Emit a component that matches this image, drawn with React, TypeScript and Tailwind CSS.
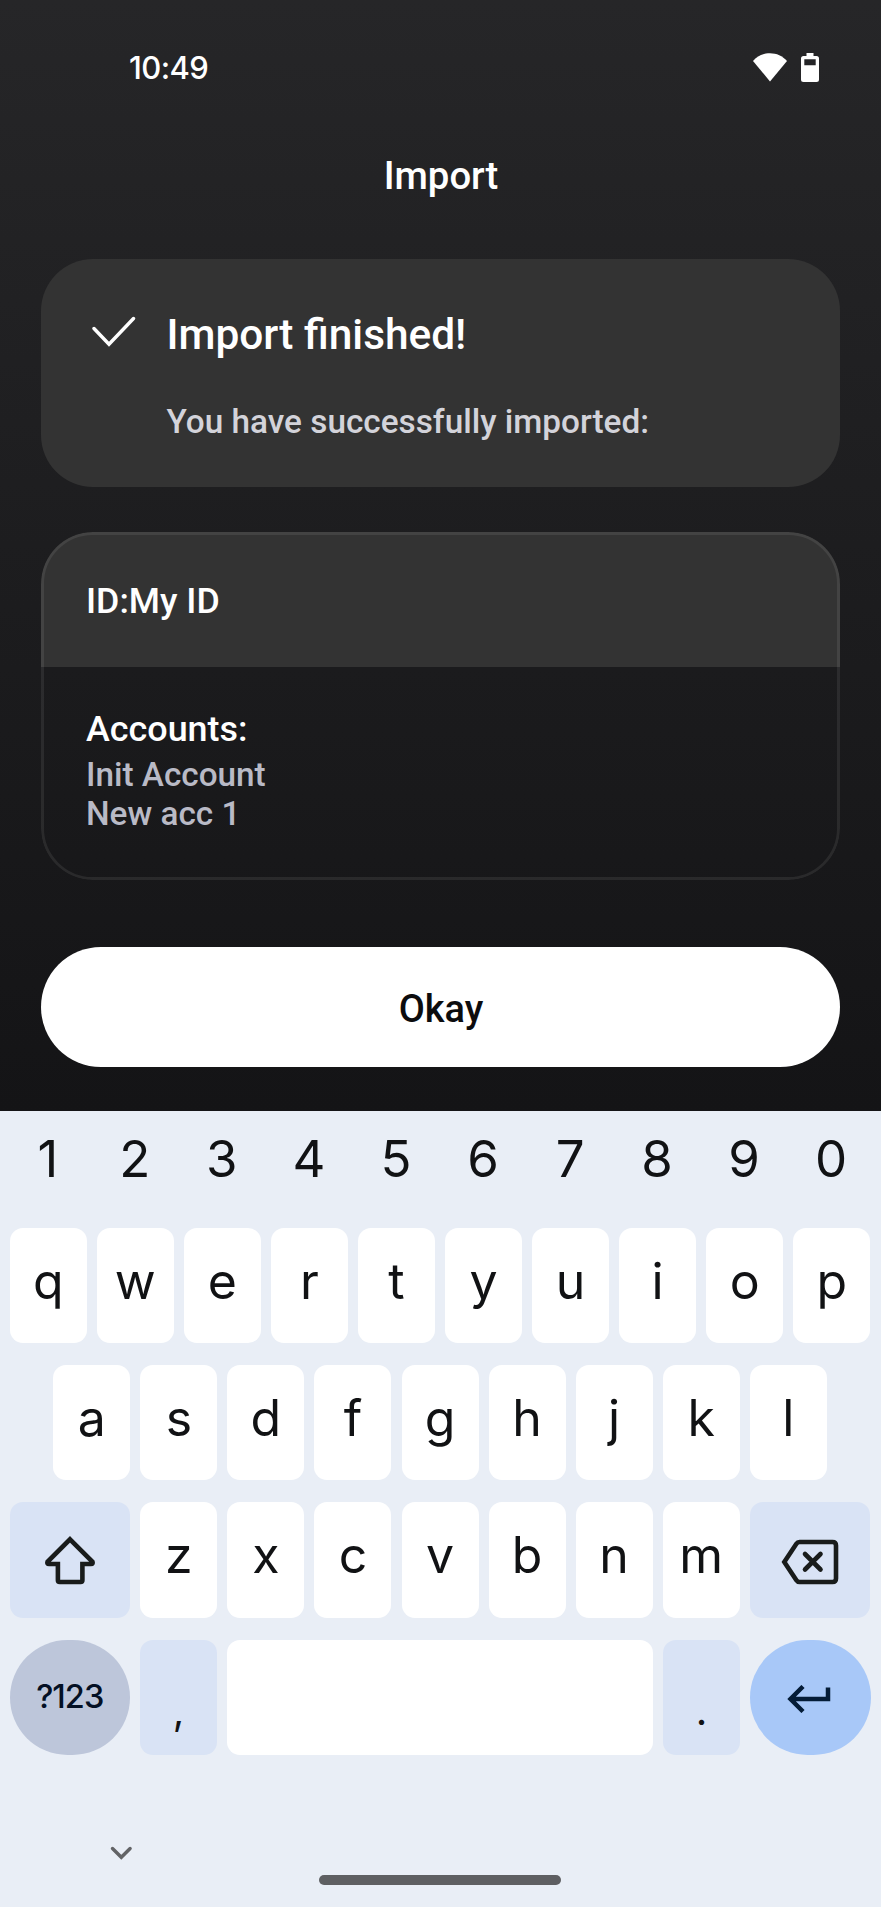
import type { ReactNode } from "react";

const DIGITS = ["1", "2", "3", "4", "5", "6", "7", "8", "9", "0"];
const ROW_ONE = ["q", "w", "e", "r", "t", "y", "u", "i", "o", "p"];
const ROW_TWO = ["a", "s", "d", "f", "g", "h", "j", "k", "l"];
const ROW_THREE = ["z", "x", "c", "v", "b", "n", "m"];

function Key({ children }: { children?: ReactNode }) {
  return (
    <div className="flex h-full w-[77px] shrink-0 items-center justify-center rounded-[13px] bg-white pb-[10px]">
      {children}
    </div>
  );
}

function KeyRow({ children }: { children: ReactNode }) {
  return <div className="flex h-[115.3px] justify-center gap-[10.06px]">{children}</div>;
}

function StatusBar() {
  return (
    <div className="flex h-[135px] items-center justify-between pr-[62px] pl-[129px]">
      <span className="font-['Inter',sans-serif] text-[31px] leading-10 font-medium tracking-[-0.6px]">10:49</span>
      <div className="flex items-center gap-[14px]">
        <svg width="34" height="29" viewBox="0 0 34 29" fill="#fff">
          <path d="M17 28.5 0 8C4.500 3 10.500 .3 17 .3S29.500 3 34 8Z" />
        </svg>
        <svg width="18" height="29" viewBox="0 0 18 29" fill="#fff">
          <path fillRule="evenodd" d="M5.500 0h7v3H15.500A2.500 2.500 0 0 1 18 5.500V26.500A2.500 2.500 0 0 1 15.500 29H2.500A2.500 2.500 0 0 1 0 26.500V5.500A2.500 2.500 0 0 1 2.500 3H5.500ZM3.300 6.200V12.200H14.700V6.200Z" />
        </svg>
      </div>
    </div>
  );
}

export default function App() {
  return (
    <div className="flex h-[1907px] w-[881px] flex-col overflow-hidden bg-[#e9eef6] font-['Roboto',sans-serif]">
      <div className="h-[1111px] shrink-0 bg-linear-to-b from-[#262628] to-[#141416] font-medium text-white">
        <StatusBar />
        <h1 className="flex h-[83px] items-center justify-center pb-[2px] pl-px text-[38.3px] leading-[46px] font-medium">Import</h1>

        <section className="mx-[41px] mt-[41px] flex h-[228px] rounded-[52px] bg-[#333333] pt-[51px] pl-[51px]">
          <svg className="mt-[6px] shrink-0" width="46" height="32" viewBox="0 0 46 32" fill="none" stroke="#fff" strokeWidth="3.4" strokeLinecap="round">
            <path d="M2 12.500 17 28.200 41.500 2.500" />
          </svg>
          <div className="ml-[28.500px]">
            <h2 className="text-[42.4px] leading-[50px] font-medium">Import finished!</h2>
            <p className="mt-[42px] text-[33.35px] leading-10 text-[#d3d3da]">You have successfully imported:</p>
          </div>
        </section>

        <section className="relative mx-[41px] mt-[45px] h-[348px] overflow-hidden rounded-[52px]">
          <div className="flex h-[135px] items-center bg-[#333333] pt-[2px] pl-[45px] text-[35.7px] leading-[44px]">ID:My ID</div>
          <div className="pt-[40px] pl-[45px]">
            <h3 className="text-[35.9px] leading-[44px] font-medium">Accounts:</h3>
            <p className="mt-[4px] text-[33.3px] leading-[39.4px] text-[#b9bac6]">Init Account</p>
            <p className="text-[33.3px] leading-[39.4px] text-[#b9bac6]">New acc 1</p>
          </div>
          <div className="pointer-events-none absolute inset-0 rounded-[52px] border-[3px] border-white/8" />
        </section>

        <button className="mx-[41px] mt-[67px] flex h-[120px] w-[799px] items-center justify-center rounded-[60px] bg-white pt-[4px] pl-px text-[37.900px] leading-[46px] font-medium text-[#0c0c0e]">
          Okay
        </button>
      </div>

      <div className="flex h-[796px] flex-col pr-[10.500px] pl-[9.500px] font-['Inter',sans-serif] text-[50px] leading-[60px] text-[#111214]">
        <div className="flex h-[95px] justify-center gap-[10.06px]">
          {DIGITS.map((d) => (
            <span key={d} className="flex w-[77px] shrink-0 items-center justify-center pt-px pr-px text-[51px]">{d}</span>
          ))}
        </div>
        <div className="mt-[22px] flex flex-col gap-[21.900px]">
          <KeyRow>{ROW_ONE.map((k) => <Key key={k}>{k}</Key>)}</KeyRow>
          <KeyRow>{ROW_TWO.map((k) => <Key key={k}>{k}</Key>)}</KeyRow>
          <KeyRow>
            <div className="flex h-full w-[120.500px] shrink-0 items-center justify-center rounded-[13px] bg-[#d9e3f5]">
              <svg width="52" height="50" viewBox="0 0 52 50" fill="none" stroke="#191c1b" strokeWidth="4.600">
                <path d="M26 4.300 48.500 26.800Q49.300 29 47 29H38.400V45.200Q38.400 47 36.600 47H15.700Q13.900 47 13.900 45.200V29H5Q2.700 29 3.500 26.800Z" />
              </svg>
            </div>
            {ROW_THREE.map((k) => <Key key={k}>{k}</Key>)}
            <div className="flex h-full w-[120.500px] shrink-0 items-center justify-center rounded-[13px] bg-[#d9e3f5] pt-1">
              <svg width="58" height="46" viewBox="0 0 58 46" fill="none" stroke="#191c1b" strokeWidth="4.600">
                <path d="M18.500 3H51.500Q55 3 55 6.500V39.500Q55 43 51.500 43H18.500Q16.500 43 15.400 41.300L3.300 23 15.400 4.700Q16.500 3 18.500 3Z" />
                <path d="M24 15 39.500 30.500M39.500 15 24 30.500" strokeLinecap="round" />
              </svg>
            </div>
          </KeyRow>
          <KeyRow>
            <div className="flex h-full w-[120.500px] shrink-0 items-center justify-center rounded-[58px] bg-[#bdc6da] text-[32.500px] leading-10 font-medium tracking-[-1px] text-[#041024]">?123</div>
            <div className="flex h-full w-[77px] shrink-0 items-center justify-center rounded-[13px] bg-[#d9e3f5] pt-[28px] text-[40px]">,</div>
            <div className="h-full flex-1 rounded-[13px] bg-white" />
            <div className="flex h-full w-[77px] shrink-0 items-center justify-center rounded-[13px] bg-[#d9e3f5] pt-[28px] text-[40px]">.</div>
            <div className="flex h-full w-[120.500px] shrink-0 items-center justify-center rounded-[58px] bg-[#a8c8f8] pt-[4px] pr-[2px]">
              <svg width="44" height="28" viewBox="0 0 44 28" fill="none" stroke="#041c37" strokeWidth="4.500">
                <path d="M41 2.500V14H4M16 1.500 3.500 14 16 26.500" />
              </svg>
            </div>
          </KeyRow>
        </div>
        <div className="mt-[91px] pl-[100.500px]">
          <svg width="24" height="15" viewBox="0 0 24 15" fill="none" stroke="#626366" strokeWidth="3.4" strokeLinecap="round">
            <path d="M2.500 2.500 11.300 11.300 20.100 2.500" />
          </svg>
        </div>
        <div className="mt-[14px] ml-[309.500px] h-[10px] w-[242px] rounded-full bg-[#5e5f62]" />
      </div>
    </div>
  );
}
